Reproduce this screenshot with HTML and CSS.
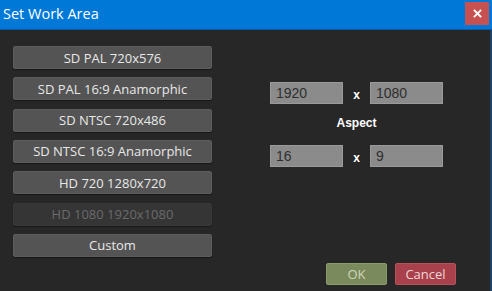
FILE: index.html
```html
<!DOCTYPE html>
<html>
<head>
<meta charset="utf-8">
<link rel="stylesheet" href="styles.css">
</head>
<body>
<div class="window">
  <div class="titlebar">
    <span class="title">Set Work Area</span>
    <button class="close" aria-label="Close">
      <svg width="9" height="9" viewBox="0 0 9 9"><path d="M1.5 1.5 L7.5 7.5 M7.5 1.5 L1.5 7.5" stroke="#fff" stroke-width="1.8" stroke-linecap="square"/></svg>
    </button>
  </div>
  <div class="content">
    <div class="presets">
      <button class="preset">SD PAL 720x576</button>
      <button class="preset">SD PAL 16:9 Anamorphic</button>
      <button class="preset">SD NTSC 720x486</button>
      <button class="preset">SD NTSC 16:9 Anamorphic</button>
      <button class="preset">HD 720 1280x720</button>
      <button class="preset disabled" disabled>HD 1080 1920x1080</button>
      <button class="preset">Custom</button>
    </div>
    <div class="settings">
      <div class="fields">
        <div class="field">1920</div>
        <div class="times">x</div>
        <div class="field">1080</div>
        <div class="label">Aspect</div>
        <div class="field">16</div>
        <div class="times">x</div>
        <div class="field">9</div>
      </div>
      <div class="actions">
        <button class="btn ok">OK</button>
        <button class="btn cancel">Cancel</button>
      </div>
    </div>
  </div>
</div>
</body>
</html>
```
FILE: styles.css
```css
html, body {
  margin: 0;
  padding: 0;
  background: #252525;
}
.window {
  width: 492px;
  height: 291px;
  display: flex;
  flex-direction: column;
  overflow: hidden;
}
.titlebar {
  height: 30px;
  background: #0078d7;
  display: flex;
  align-items: center;
  justify-content: space-between;
  padding: 0 3px 0 3px;
  box-sizing: border-box;
  border-bottom: 1px solid #0a5aa0;
}
.title {
  color: #ffffff;
  font-family: "Open Sans", "Noto Sans", sans-serif;
  font-size: 14.5px;
  margin-top: -3px;
}
.close {
  width: 24px;
  height: 23px;
  margin-top: -2px;
  background: #c75050;
  border: none;
  padding: 0;
  display: flex;
  align-items: center;
  justify-content: center;
}
.content {
  flex: 1;
  display: flex;
  border-right: 2px solid #1d4265;
  background: #272727;
}
.presets {
  width: 199px;
  margin-left: 13px;
  padding: 16px 0 0 0;
  display: flex;
  flex-direction: column;
  gap: 8.33px;
}
.preset {
  height: 23px;
  background: #545454;
  border: 1px solid #5c5c5c;
  border-radius: 2px;
  color: #e8e8e8;
  font-family: "Open Sans", "Noto Sans", sans-serif;
  font-size: 13px;
  padding: 0;
  box-shadow: 0 1px 1px rgba(0,0,0,0.4);
}
.preset.disabled {
  background: #353535;
  border-color: #383838;
  color: #6b6b6b;
}
.settings {
  margin-left: 58px;
  padding-top: 52px;
  width: 200px;
  display: flex;
  flex-direction: column;
}
.fields {
  display: grid;
  grid-template-columns: 73px 27px 73px;
  grid-template-rows: 22px 40px 23px;
  align-items: center;
}
.field {
  height: 22px;
  box-sizing: border-box;
  background: #8b8b8b;
  border: 1px solid #9a9a9a;
  color: #2e2e2e;
  font-family: "Liberation Sans", Arial, sans-serif;
  font-size: 14px;
  line-height: 20px;
  padding-left: 5px;
}
.times {
  color: #ffffff;
  font-family: "Liberation Sans", Arial, sans-serif;
  font-weight: bold;
  font-size: 12px;
  text-align: center;
  margin-top: 4px;
}
.label {
  grid-column: 1 / 4;
  text-align: center;
  color: #ffffff;
  font-family: "Liberation Sans", Arial, sans-serif;
  font-weight: bold;
  font-size: 12px;
  margin-top: -3px;
}
.actions {
  margin-top: 96px;
  margin-left: 56px;
  display: flex;
  gap: 8px;
}
.btn {
  flex: none;
  width: 61px;
  height: 22px;
  border-radius: 2px;
  font-family: "Open Sans", "Noto Sans", sans-serif;
  font-size: 13px;
  padding: 0;
}
.ok {
  background: #7b8a5d;
  border: 1px solid #8a9a6a;
  color: #cfd6b8;
}
.cancel {
  background: #a8414b;
  border: 1px solid #b8525b;
  color: #f2d6d6;
}
```
